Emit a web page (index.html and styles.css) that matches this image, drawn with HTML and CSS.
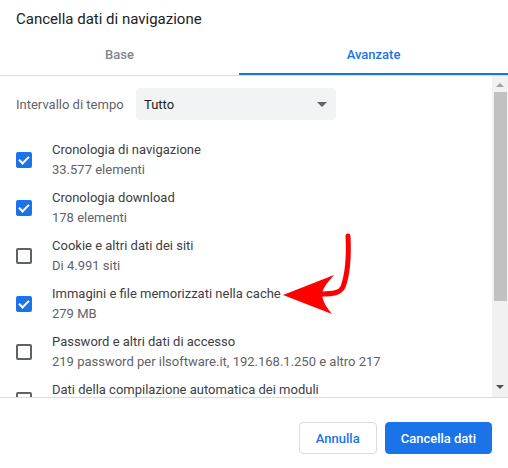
FILE: index.html
```html
<!DOCTYPE html>
<html lang="it">
<head>
    <meta charset="UTF-8">
    <meta name="viewport" content="width=device-width, initial-scale=1.0">
    <title>Cancella dati di navigazione</title>
    <link rel="stylesheet" href="styles.css">
</head>
<body>
<div class="dialog">
    <h1 class="title">Cancella dati di navigazione</h1>

    <!-- Tabs -->
    <div class="tabs">
        <div class="tab first">Base</div>
        <div class="tab active">Avanzate</div>
    </div>

    <!-- Scrolling body -->
    <div class="body">
        <div class="content">
            <div class="range">
                <span class="range-label">Intervallo di tempo</span>
                <div class="select">
                    <span>Tutto</span>
                    <span class="caret"></span>
                </div>
            </div>

            <div class="item">
                <span class="check on"></span>
                <div class="text">
                    <div class="name">Cronologia di navigazione</div>
                    <div class="sub">33.577 elementi</div>
                </div>
            </div>
            <div class="item">
                <span class="check on"></span>
                <div class="text">
                    <div class="name">Cronologia download</div>
                    <div class="sub">178 elementi</div>
                </div>
            </div>
            <div class="item">
                <span class="check"></span>
                <div class="text">
                    <div class="name">Cookie e altri dati dei siti</div>
                    <div class="sub">Di 4.991 siti</div>
                </div>
            </div>
            <div class="item">
                <span class="check on"></span>
                <div class="text">
                    <div class="name">Immagini e file memorizzati nella cache</div>
                    <div class="sub">279 MB</div>
                </div>
            </div>
            <div class="item">
                <span class="check"></span>
                <div class="text">
                    <div class="name">Password e altri dati di accesso</div>
                    <div class="sub">219 password per ilsoftware.it, 192.168.1.250 e altro 217</div>
                </div>
            </div>
            <div class="item">
                <span class="check"></span>
                <div class="text">
                    <div class="name">Dati della compilazione automatica dei moduli</div>
                    <div class="sub">&nbsp;</div>
                </div>
            </div>
        </div>

        <div class="scrollbar">
            <span class="sb-up"></span>
            <span class="sb-thumb"></span>
            <span class="sb-down"></span>
        </div>
    </div>

    <!-- Buttons -->
    <div class="footer">
        <button class="btn">Annulla</button>
        <button class="btn primary">Cancella dati</button>
    </div>

    <!-- Red annotation arrow -->
    <svg class="arrow" width="508" height="468" viewBox="0 0 508 468">
        <path d="M348 236 C349 256 347 276 343 287 C340 293 333 294 322 294" fill="none" stroke="#ff0000" stroke-width="5" stroke-linecap="round"/>
        <path d="M283 295 L334 275 C327 283 322 289 322 295 C323 302 327 308 332 314 Z" fill="#ff0000"/>
    </svg>
</div>
</body>
</html>
```

FILE: styles.css
```css
body { margin: 0; font-family: Roboto, "Liberation Sans", sans-serif; background: #fff; }
.dialog { position: relative; width: 508px; height: 468px; overflow: hidden; display: flex; flex-direction: column; }
.title { margin: 0; padding: 9px 16px 0; height: 27px; font-size: 15px; font-weight: 400; color: #202124; line-height: 20px; }

.tabs { display: flex; height: 39px; border-bottom: 1px solid #e0e0e0; }
.tab { flex: 1 1 0; text-align: center; font-size: 13px; font-weight: 500; color: #80868b; line-height: 38px; padding-bottom: 1px; }
.tab.first { flex: none; width: 239px; }
.tab.active { color: #1a73e8; box-shadow: inset 0 -2px 0 #1a73e8; }

.body { display: flex; height: 321px; border-bottom: 1px solid #dadce0; }
.content { flex: 1; overflow: hidden; padding: 12px 0 0 16px; }

.range { display: flex; align-items: center; height: 32px; margin-bottom: 16px; }
.range-label { width: 120px; font-size: 13px; color: #5f6368; }
.select { width: 200px; height: 32px; box-sizing: border-box; background: #f1f3f4; border-radius: 4px; display: flex; align-items: center; justify-content: space-between; padding: 0 9px 0 8px; font-size: 13px; color: #202124; }
.caret { width: 0; height: 0; border-left: 5px solid transparent; border-right: 5px solid transparent; border-top: 5px solid #5f6368; }

.item { display: flex; align-items: center; height: 48px; }
.check { width: 16px; height: 16px; box-sizing: border-box; border: 2px solid #5f6368; border-radius: 2px; margin-right: 20px; flex: none; position: relative; }
.check.on { background: #1a73e8; border-color: #1a73e8; }
.check.on::after { content: ""; position: absolute; left: 3px; top: 0px; width: 4px; height: 8px; border: solid #fff; border-width: 0 2px 2px 0; transform: rotate(45deg); }
.text { font-size: 13px; line-height: 20px; }
.name { color: #3c4043; }
.sub { color: #5f6368; }

.scrollbar { width: 16px; background: #f1f1f1; display: flex; flex-direction: column; align-items: center; }
.sb-up { margin-top: 7px; width: 0; height: 0; border-left: 4px solid transparent; border-right: 4px solid transparent; border-bottom: 4px solid #a3a3a3; }
.sb-thumb { margin-top: 5px; width: 13px; height: 209px; background: #c1c1c1; margin-left: 1px; }
.sb-down { margin-top: auto; margin-bottom: 8px; width: 0; height: 0; border-left: 4px solid transparent; border-right: 4px solid transparent; border-top: 4px solid #505050; }

.footer { display: flex; justify-content: flex-end; gap: 8px; padding: 24px 16px 0; }
.btn { height: 32px; border-radius: 4px; font-family: Roboto, "Liberation Sans", sans-serif; font-size: 13px; font-weight: 500; padding: 0 16px; border: 1px solid #dadce0; background: #fff; color: #1a73e8; }
.btn.primary { background: #1a73e8; border-color: #1a73e8; color: #fff; padding: 0 15px; }

.arrow { position: absolute; left: 0; top: 0; pointer-events: none; }
```
